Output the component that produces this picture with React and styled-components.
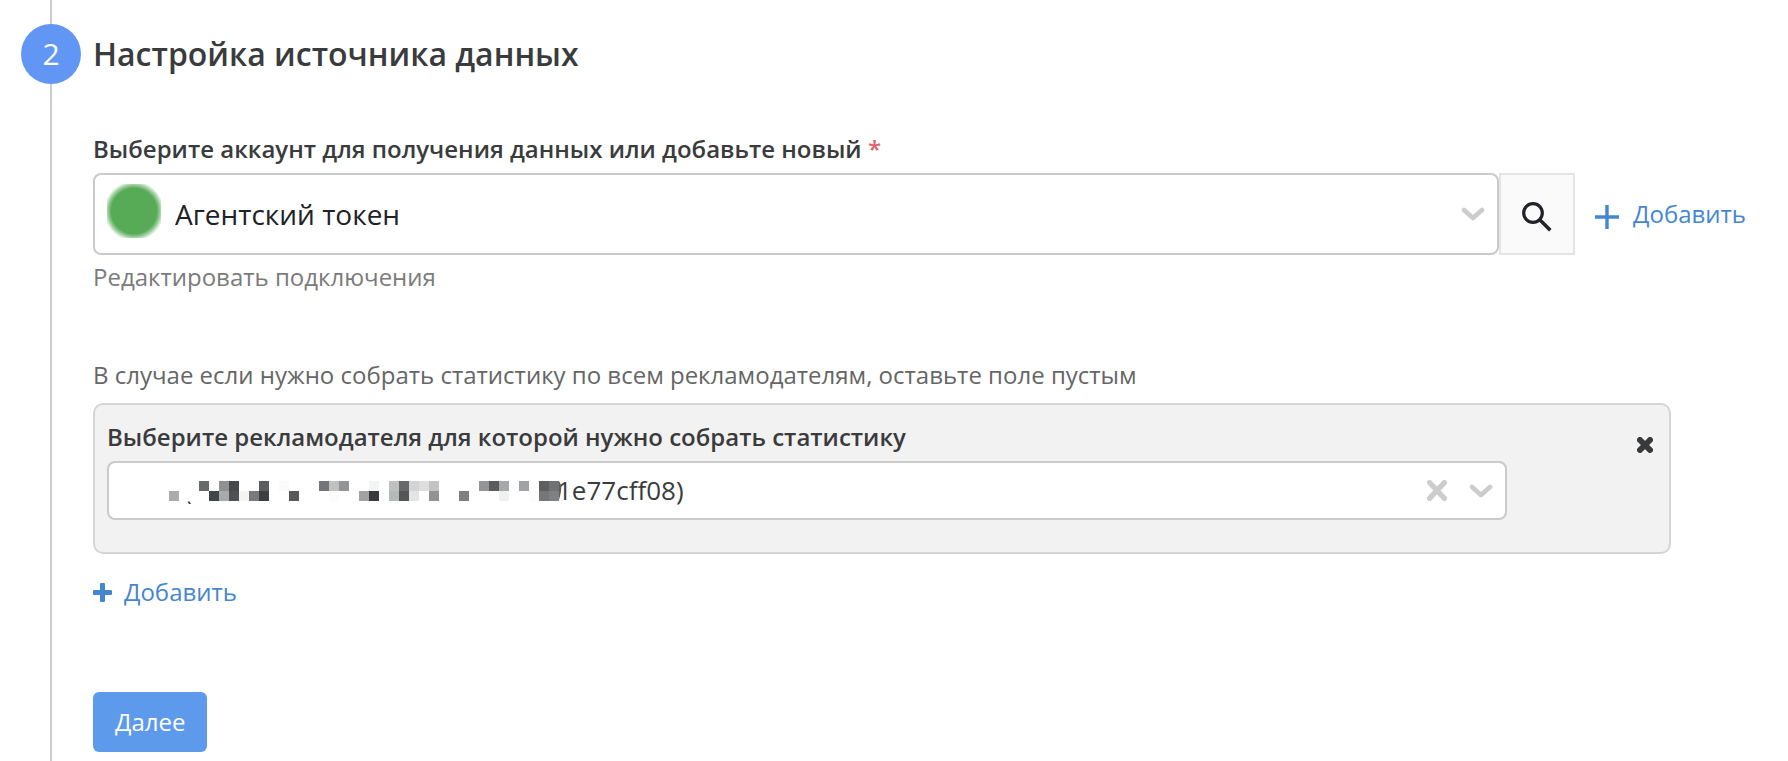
import React, { useState } from 'react'
import styled, { createGlobalStyle } from 'styled-components'

const GlobalStyle = createGlobalStyle`
    *,
    *::before,
    *::after {
        box-sizing: border-box;
    }

    body {
        margin: 0;
        background: #fff;
        color: #3a3b3d;
        font-family: 'Open Sans', 'Noto Sans', sans-serif;
        font-size: 24px;
        line-height: 32px;
    }

    button,
    select {
        font: inherit;
        color: inherit;
    }
`

const Step = styled.section`
    display: flex;
    gap: 12px;
    min-height: 100vh;
    padding: 0 42px 0 21px;
`

const Rail = styled.div`
    display: flex;
    flex-direction: column;
    align-items: center;
    flex: none;
    width: 60px;
`

const RailLine = styled.div`
    width: 2px;
    ${props => (props.$grow ? 'flex: 1;' : 'height: 24px;')}
    background: #ccc;
`

const StepNumber = styled.div`
    display: flex;
    align-items: center;
    justify-content: center;
    width: 60px;
    height: 60px;
    border-radius: 50%;
    background: #6196f4;
    color: #fff;
    font-size: 30px;
`

const Content = styled.div`
    flex: 1;
    min-width: 0;
    padding: 24px 0 8px;
`

const Title = styled.h2`
    margin: 0 0 49px;
    font-size: 32px;
    font-weight: 600;
    line-height: 60px;
`

const Label = styled.label`
    display: block;
    margin-bottom: 8px;
    font-weight: 600;
`

const Required = styled.span`
    color: #e0616a;
`

const AccountRow = styled.div`
    display: flex;
    align-items: stretch;
    margin-bottom: 6px;
`

const SelectBox = styled.div`
    position: relative;
    flex: 1;
    min-width: 0;
`

const Select = styled.select`
    display: block;
    width: 100%;
    height: ${props => (props.$large ? '82px' : '59px')};
    padding: ${props => (props.$large ? '0 90px 0' : '0 90px 2px')} ${props => props.$indent};
    border: 2px solid #cacaca;
    border-radius: 8px;
    background: #fff;
    appearance: none;
    color: ${props => (props.$large ? '#212227' : '#3a3b3d')};
    font-size: ${props => (props.$large ? '28px' : '26px')};
`

const Avatar = styled.svg`
    position: absolute;
    top: 11px;
    left: 14px;
    pointer-events: none;
`

const Mosaic = styled.svg`
    position: absolute;
    top: 20px;
    left: 62px;
    pointer-events: none;
`

const Indicators = styled.div`
    position: absolute;
    top: 0;
    right: 14px;
    bottom: 0;
    display: flex;
    align-items: center;
    gap: 22px;
    pointer-events: none;
`

const IconButton = styled.button`
    display: flex;
    padding: 0;
    border: 0;
    background: none;
    cursor: pointer;
    pointer-events: auto;
`

const ClearButton = styled(IconButton)`
    color: #ccc;
`

const SearchButton = styled.button`
    display: flex;
    align-items: center;
    justify-content: center;
    width: 76px;
    padding: 6px 0 0;
    border: 2px solid #e4e4e4;
    background: #fafafa;
    color: #212227;
    cursor: pointer;
`

const AddButton = styled.button`
    display: flex;
    align-items: center;
    gap: ${props => props.$gap};
    margin-left: ${props => props.$left || 0};
    padding: 0;
    border: 0;
    background: none;
    color: #4586d0;
    cursor: pointer;
`

const AddIcon = styled.svg`
    margin-top: 6px;
`

const EditLink = styled.a`
    color: #7b7b7b;
    text-decoration: none;
`

const Hint = styled.p`
    margin: 66px 0 12px;
    color: #666;
`

const Panel = styled.div`
    display: flex;
    align-items: flex-start;
    margin: 0 75px 22px 0;
    padding: 16px 16px 32px 12px;
    border: 2px solid #d5d5d5;
    border-radius: 10px;
    background: #f2f2f2;
`

const Field = styled.div`
    flex: 1;
    min-width: 0;
    margin-right: 130px;
`

const CloseButton = styled(IconButton)`
    margin-top: 16px;
    color: #38393b;
`

const NextButton = styled.button`
    display: block;
    margin-top: 84px;
    padding: 14px 22px;
    border: 0;
    border-radius: 6px;
    background: #5e9aec;
    color: #fff;
    cursor: pointer;
`

// [x, y, color] in mosaic cells
const CELLS = [
    [3, 0, '#67696b'],
    [5, 0, '#8f9092'],
    [6, 0, '#48494b'],
    [9, 0, '#5c5d5f'],
    [11, 0, '#fafafa'],
    [15, 0, '#747578'],
    [16, 0, '#c0c0c0'],
    [17, 0, '#929395'],
    [20, 0, '#f2f4f4'],
    [22, 0, '#c0c0c0'],
    [23, 0, '#68696b'],
    [24, 0, '#d4d4d4'],
    [25, 0, '#dedede'],
    [26, 0, '#c2c4c3'],
    [31, 0, '#949597'],
    [32, 0, '#5a5b5d'],
    [33, 0, '#a7a8aa'],
    [35, 0, '#a1a2a4'],
    [37, 0, '#5e5f61'],
    [38, 0, '#717274'],
    [0, 1, '#aaabad'],
    [4, 1, '#444547'],
    [5, 1, '#a9aaac'],
    [6, 1, '#4f5052'],
    [7, 1, '#f4f4f4'],
    [8, 1, '#797a7d'],
    [9, 1, '#3d3e40'],
    [12, 1, '#58595b'],
    [16, 1, '#fbfbfb'],
    [19, 1, '#a1a2a4'],
    [20, 1, '#38393b'],
    [22, 1, '#b7b8ba'],
    [23, 1, '#545557'],
    [24, 1, '#e2e5e4'],
    [26, 1, '#929292'],
    [29, 1, '#7f8082'],
    [33, 1, '#eef1f0'],
    [36, 1, '#fbfbfb'],
    [37, 1, '#757678'],
    [38, 1, '#7f8082'],
]

const Chevron = () => (
    <svg width="24" height="14" viewBox="0 0 24 14" fill="none" aria-hidden="true">
        <path
            d="M3 3l9 8 9-8"
            stroke="#ccc"
            strokeWidth="4.6"
            strokeLinecap="round"
            strokeLinejoin="round"
        />
    </svg>
)

const Cross = ({ width, height, stroke }) => {
    const near = stroke / 2
    const right = width - near
    const bottom = height - near

    return (
        <svg width={width} height={height} viewBox={`0 0 ${width} ${height}`} aria-hidden="true">
            <path
                d={`M${near} ${near}L${right} ${bottom}M${right} ${near}L${near} ${bottom}`}
                stroke="currentColor"
                strokeWidth={stroke}
                strokeLinecap="round"
            />
        </svg>
    )
}

const GreenAvatar = () => (
    <Avatar width="54" height="54" viewBox="0 0 54 54" aria-hidden="true">
        <defs>
            <radialGradient id="avatar" gradientUnits="userSpaceOnUse" cx="27" cy="27" r="30">
                <stop offset="0.76" stopColor="#57ab57" />
                <stop offset="0.87" stopColor="#57ab57" stopOpacity="0.6" />
                <stop offset="1" stopColor="#57ab57" stopOpacity="0" />
            </radialGradient>
        </defs>
        <rect width="54" height="54" fill="url(#avatar)" />
    </Avatar>
)

const HiddenName = () => (
    <Mosaic width="396" height="24" viewBox="0 0 396 24" aria-hidden="true">
        {CELLS.map(([x, y, fill]) => (
            <rect
                key={`${x}-${y}`}
                x={x * 10}
                y={y * 10}
                width="10"
                height="10"
                fill={fill}
                shapeRendering="crispEdges"
            />
        ))}
        <path d="M390 0q3 4 2 10t-2 9z" fill="#5b5c5e" />
        <path d="M18.500 20.500h2l1.500 2.500h-2z" fill="#3a3b3d" />
    </Mosaic>
)

const App = () => {
    const [advertiser, setAdvertiser] = useState('1')

    return (
        <React.Fragment>
            <GlobalStyle />
            <Step>
                <Rail>
                    <RailLine />
                    <StepNumber>2</StepNumber>
                    <RailLine $grow />
                </Rail>
                <Content>
                    <Title>Настройка источника данных</Title>

                    <Label htmlFor="account">
                        Выберите аккаунт для получения данных или добавьте новый <Required>*</Required>
                    </Label>
                    <AccountRow>
                        <SelectBox>
                            <Select id="account" $large $indent="80px">
                                <option>Агентский токен</option>
                            </Select>
                            <GreenAvatar />
                            <Indicators>
                                <Chevron />
                            </Indicators>
                        </SelectBox>
                        <SearchButton type="button" aria-label="Поиск">
                            <svg width="30" height="30" viewBox="0 0 30 30" fill="none" stroke="currentColor" aria-hidden="true">
                                <circle cx="11" cy="11" r="9.300" strokeWidth="3.200" />
                                <path d="M17.500 17.500L28.300 28.300" strokeWidth="3.600" />
                            </svg>
                        </SearchButton>
                        <AddButton type="button" $gap="14px" $left="20px">
                            <AddIcon width="24" height="24" viewBox="0 0 24 24" aria-hidden="true">
                                <path d="M12 0v24M0 12h24" stroke="currentColor" strokeWidth="3.400" />
                            </AddIcon>
                            Добавить
                        </AddButton>
                    </AccountRow>
                    <EditLink href="#connections">Редактировать подключения</EditLink>

                    <Hint>В случае если нужно собрать статистику по всем рекламодателям, оставьте поле пустым</Hint>
                    <Panel>
                        <Field>
                            <Label htmlFor="advertiser">
                                Выберите рекламодателя для которой нужно собрать статистику
                            </Label>
                            <SelectBox>
                                <Select
                                    id="advertiser"
                                    $indent="448px"
                                    value={advertiser}
                                    onChange={e => setAdvertiser(e.target.value)}
                                >
                                    <option value="" />
                                    <option value="1">1e77cff08)</option>
                                </Select>
                                {advertiser && <HiddenName />}
                                <Indicators>
                                    <ClearButton
                                        type="button"
                                        aria-label="Очистить"
                                        onClick={() => setAdvertiser('')}
                                    >
                                        <Cross width={20} height={21} stroke={5.2} />
                                    </ClearButton>
                                    <Chevron />
                                </Indicators>
                            </SelectBox>
                        </Field>
                        <CloseButton type="button" aria-label="Удалить">
                            <Cross width={16} height={16} stroke={6} />
                        </CloseButton>
                    </Panel>
                    <AddButton type="button" $gap="12px">
                        <svg width="19" height="19" viewBox="0 0 19 19" aria-hidden="true">
                            <rect x="7" width="5" height="19" rx="1" fill="currentColor" />
                            <rect y="7" width="19" height="5" rx="1" fill="currentColor" />
                        </svg>
                        Добавить
                    </AddButton>

                    <NextButton type="button">Далее</NextButton>
                </Content>
            </Step>
        </React.Fragment>
    )
}

export default App
